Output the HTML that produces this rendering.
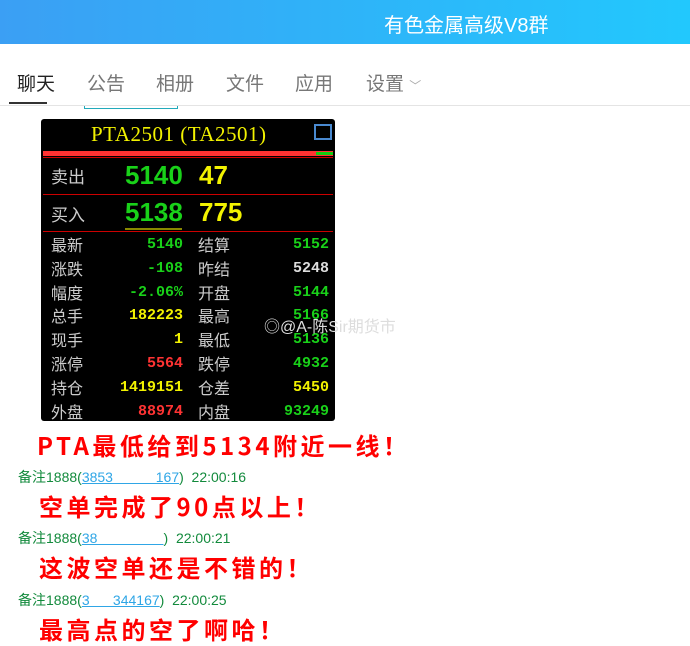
<html><head><style>
body{margin:0;width:690px;height:643px;overflow:hidden;background:#fff;font-family:"Liberation Sans","Noto Sans CJK SC",sans-serif;position:relative}
.a{position:absolute;white-space:nowrap}
.hd{position:absolute;left:0;top:0;width:690px;height:44px;background:linear-gradient(90deg,#3b9ff4,#22c8fd)}
.tab{font-size:19px;color:#777;top:69px}
.t{position:absolute;left:41px;top:119px;width:294px;height:302px;background:#000;border-radius:3px}
.c{font-family:"Noto Sans CJK SC",sans-serif;color:#ccc;font-size:16px}
.n{font-family:"Liberation Mono",monospace;font-weight:bold;font-size:15px;text-align:right}
.g{color:#19d119}.y{color:#f2f200}.r{color:#f33}.w{color:#ddd}
.big{font-family:"Liberation Sans",sans-serif;font-weight:bold;font-size:26px}
.red{color:#f00;font-family:"Noto Sans CJK SC",sans-serif;font-weight:bold;font-size:24px;letter-spacing:3.5px}
.m{font-size:14px;color:#128a3c}
.m u{color:#2fa6e6}
</style></head><body>
<div class="hd"></div>
<div class="a" style="left:384px;top:9px;color:#fff;font-size:20px">有色金属高级V8群</div>
<div class="a tab" style="left:17px;color:#222">聊天</div>
<div class="a tab" style="left:87px">公告</div>
<div class="a tab" style="left:156px">相册</div>
<div class="a tab" style="left:226px">文件</div>
<div class="a tab" style="left:295px">应用</div>
<div class="a tab" style="left:366px">设置 <span style="font-size:12px;color:#aaa">﹀</span></div>
<div class="a" style="left:9px;top:102px;width:38px;height:2px;background:#333"></div>
<div class="a" style="left:0;top:105px;width:690px;height:1px;background:#e4e4e4"></div>
<div class="a" style="left:84px;top:106px;width:92px;height:2px;border:1px solid #2ab;border-top:none"></div>
<div class="t">
 <div class="a" style="left:50px;top:3px;color:#f2f200;font-family:'Liberation Serif','Noto Serif CJK SC',serif;font-size:21px;letter-spacing:0.5px">PTA2501 (TA2501)</div>
 <div class="a" style="left:273px;top:5px;width:14px;height:12px;border:2px solid #4a8ad0"></div>
 <div class="a" style="left:2px;top:32px;width:290px;height:5px;background:#f33"></div>
 <div class="a" style="left:275px;top:33px;width:17px;height:3px;background:#1c1"></div>
 <div class="a" style="left:2px;top:38px;width:290px;height:1px;background:#c00"></div>
 <div class="a" style="left:2px;top:75px;width:290px;height:1px;background:#c00"></div>
 <div class="a" style="left:2px;top:112px;width:290px;height:1px;background:#c00"></div>
 <div class="a c" style="left:10px;top:44px;font-size:17px">卖出</div>
 <div class="a big g" style="left:84px;top:41px">5140</div>
 <div class="a big y" style="left:158px;top:41px">47</div>
 <div class="a c" style="left:10px;top:82px;font-size:17px">买入</div>
 <div class="a big g" style="left:84px;top:78px">5138</div>
 <div class="a" style="left:84px;top:109px;width:57px;height:2px;background:#880"></div>
 <div class="a big y" style="left:158px;top:78px">775</div>
 <div style="position:absolute;left:10px;top:114px;width:280px;line-height:23.8px">
  <div style="position:absolute;left:0;top:0" class="c">最新<br>涨跌<br>幅度<br>总手<br>现手<br>涨停<br>持仓<br>外盘</div>
  <div style="position:absolute;right:148px;top:0" class="n"><span class="g">5140</span><br><span class="g">-108</span><br><span class="g">-2.06%</span><br><span class="y">182223</span><br><span class="y">1</span><br><span class="r">5564</span><br><span class="y">1419151</span><br><span class="r">88974</span></div>
  <div style="position:absolute;left:147px;top:0" class="c">结算<br>昨结<br>开盘<br>最高<br>最低<br>跌停<br>仓差<br>内盘</div>
  <div style="position:absolute;right:2px;top:0" class="n"><span class="g">5152</span><br><span class="w">5248</span><br><span class="g">5144</span><br><span class="g">5166</span><br><span class="g">5136</span><br><span class="g">4932</span><br><span class="y">5450</span><br><span class="g">93249</span></div>
 </div>
</div>
<div class="a" style="left:264px;top:313px;color:#ddd;font-size:16px">◎@A-陈Sir期货市</div>
<div class="a red" style="left:37px;top:427px">PTA最低给到5134附近一线！</div>
<div class="a m" style="left:18px;top:467px">备注1888(<u>3853&nbsp;&nbsp;&nbsp;&nbsp;&nbsp;&nbsp;&nbsp;&nbsp;&nbsp;&nbsp;&nbsp;167</u>)&nbsp; 22:00:16</div>
<div class="a red" style="left:39px;top:488px">空单完成了90点以上！</div>
<div class="a m" style="left:18px;top:528px">备注1888(<u>38&nbsp;&nbsp;&nbsp;&nbsp;&nbsp;&nbsp;&nbsp;&nbsp;&nbsp;&nbsp;&nbsp;&nbsp;&nbsp;&nbsp;&nbsp;&nbsp;&nbsp;</u>)&nbsp; 22:00:21</div>
<div class="a red" style="left:39px;top:549px">这波空单还是不错的！</div>
<div class="a m" style="left:18px;top:590px">备注1888(<u>3&nbsp;&nbsp;&nbsp;&nbsp;&nbsp;&nbsp;344167</u>)&nbsp; 22:00:25</div>
<div class="a red" style="left:39px;top:611px">最高点的空了啊哈！</div>
</body></html>
